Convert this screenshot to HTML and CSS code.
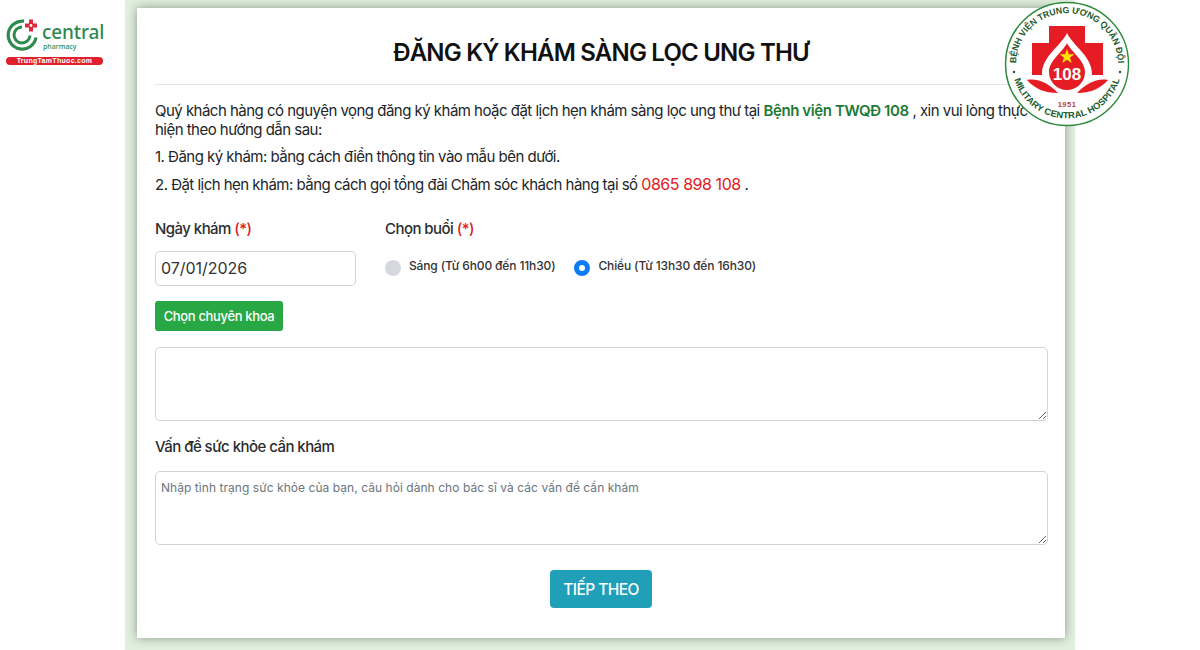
FILE: index.html
```html
<!DOCTYPE html>
<html lang="vi">
<head>
<meta charset="utf-8">
<title>Đăng ký khám sàng lọc ung thư</title>
<link rel="stylesheet" href="styles.css">
</head>
<body>
<a class="brand">
  <svg class="brand-mark" width="36" height="36" viewBox="0 0 36 36">
    <path d="M19 3.2A14 14 0 1 0 31 19.5" fill="none" stroke="#2f8a4e" stroke-width="3.2"/>
    <path d="M17 9A8 8 0 1 0 25 17.5" fill="none" stroke="#2f8a4e" stroke-width="3"/>
    <path d="M24 1.5h4v4h4v4h-4v4h-4v-4h-4v-4h4z" fill="#e0263a"/>
    <circle cx="26" cy="7.5" r="1.4" fill="#fff"/>
  </svg>
  <span class="brand-name">central</span>
  <span class="brand-sub">pharmacy</span>
  <span class="brand-url">TrungTamThuoc.com</span>
</a>

<svg class="seal" width="128" height="128" viewBox="0 0 128 128">
  <circle cx="64" cy="64" r="61.5" fill="#fff" stroke="#2c8a3c" stroke-width="1.4"/>
  <path d="M46 26h36v17h18v32H82v12H46V75H29V43h17z" fill="#e51c23"/>
  <path d="M64 33C58 46 39 56 39 74c0 12 11 22 25 22s25-10 25-22C89 56 70 46 64 33z" fill="#fff"/>
  <path d="M64 43C60 52 46 60 46 72c0 10 8 18 18 18s18-8 18-18C82 60 68 52 64 43z" fill="#e51c23"/>
  <path d="M64 49l1.900 5.200h5.500l-4.400 3.300 1.700 5.500-4.700-3.300-4.700 3.300 1.700-5.500-4.400-3.300h5.500z" fill="#ffe400"/>
  <path d="M24 80C36 78 46 84 55 93C42 93 32 89 24 80zM105 80C93 78 83 84 74 93C87 93 97 89 105 80z" fill="#e51c23"/>
  <text class="seal-num" x="64" y="80" text-anchor="middle">108</text>
  <text class="seal-year" x="64" y="107" text-anchor="middle">1951</text>
  <defs>
    <path id="seal-top" d="M15.500 80A51 51 0 1 1 112.500 80"/>
    <path id="seal-bottom" d="M9.500 56A55 55 0 1 0 118.500 56"/>
  </defs>
  <text class="seal-text"><textPath href="#seal-top" startOffset="50%" text-anchor="middle" textLength="158" lengthAdjust="spacingAndGlyphs">BỆNH VIỆN TRUNG ƯƠNG QUÂN ĐỘI</textPath></text>
  <text class="seal-text"><textPath href="#seal-bottom" startOffset="50%" text-anchor="middle" textLength="140" lengthAdjust="spacingAndGlyphs">MILITARY CENTRAL HOSPITAL</textPath></text>
  <circle cx="11" cy="72" r="1.2" fill="#1d5a2a"/>
  <circle cx="117" cy="72" r="1.2" fill="#1d5a2a"/>
</svg>

<div class="backdrop">
  <main class="card">
    <h1 class="title">ĐĂNG KÝ KHÁM SÀNG LỌC UNG THƯ</h1>
    <div class="intro">
      <p class="intro-lead">Quý khách hàng có nguyện vọng đăng ký khám hoặc đặt lịch hẹn khám sàng lọc ung thư tại <strong class="hospital">Bệnh viện TWQĐ 108</strong> , xin vui lòng thực hiện theo hướng dẫn sau:</p>
      <p class="intro-step">1. Đăng ký khám: bằng cách điền thông tin vào mẫu bên dưới.</p>
      <p class="intro-step">2. Đặt lịch hẹn khám: bằng cách gọi tổng đài Chăm sóc khách hàng tại số <span class="phone">0865 898 108</span> .</p>
    </div>

    <form class="form">
      <div class="row">
        <div class="field-date">
          <label class="label">Ngày khám <span class="req">(*)</span></label>
          <div class="input">07/01/2026</div>
        </div>
        <div class="field-session">
          <label class="label">Chọn buổi <span class="req">(*)</span></label>
          <div class="radios">
            <div class="radio"><span class="dot"></span><span class="radio-text">Sáng (Từ 6h00 đến 11h30)</span></div>
            <div class="radio"><span class="dot dot-on"></span><span class="radio-text">Chiều (Từ 13h30 đến 16h30)</span></div>
          </div>
        </div>
      </div>
      <button type="button" class="btn-green">Chọn chuyên khoa</button>
      <textarea class="area area-first"></textarea>
      <label class="label label-health">Vấn đề sức khỏe cần khám</label>
      <textarea class="area" placeholder="Nhập tình trạng sức khỏe của bạn, câu hỏi dành cho bác sĩ và các vấn đề cần khám"></textarea>
      <div class="actions"><button type="button" class="btn-next">TIẾP THEO</button></div>
    </form>
  </main>
</div>
</body>
</html>
```

FILE: styles.css
```css
* { box-sizing: border-box; }
html, body { margin: 0; height: 650px; overflow: hidden; }
body {
  position: relative;
  background: #fff;
  font-family: Inter, "Liberation Sans", sans-serif;
  color: #212529;
  display: flex;
  justify-content: center;
}
.backdrop {
  width: 950px;
  height: 650px;
  background: #e2f0e0;
  padding: 8px 10px 12px 12px;
}
.card {
  height: 630px;
  background: #fff;
  padding: 0 18px;
  box-shadow: 0 0 10px rgba(60, 80, 60, .55);
}
.title {
  margin: 0;
  height: 77px;
  padding-top: 27px;
  border-bottom: 1px solid #e2e4e6;
  text-align: center;
  font-size: 24px;
  line-height: 36px;
  font-weight: 600;
  letter-spacing: -.8px;
  color: #111;
}
.intro { padding-top: 16px; font-size: 15px; letter-spacing: -.52px; }
.intro p { margin: 0; }
.intro-lead { line-height: 19px; margin-bottom: 9px !important; width: 880px; }
.intro-step { line-height: 18px; margin-bottom: 9px !important; }
.hospital { color: #1f7a35; font-weight: 600; letter-spacing: -.4px; }
.phone { color: #e01b1b; font-size: 16px; font-weight: 400; letter-spacing: -.45px; }
.form { padding-top: 17px; }
.row { display: flex; }
.field-date { width: 230px; }
.label { display: block; font-size: 15px; line-height: 18px; letter-spacing: -.55px; font-weight: 500; color: #2a2d30; }
.req { color: #e01b1b; }
.input {
  margin-top: 13px;
  width: 201px;
  height: 35px;
  border: 1px solid #ced4da;
  border-radius: 5px;
  padding: 0 5px;
  font-size: 16px;
  line-height: 32px;
  letter-spacing: -.05px;
  color: #333;
}
.radios { display: flex; gap: 19px; margin-top: 14px; }
.radio { display: flex; align-items: flex-start; gap: 8px; padding-top: 6px; }
.dot { width: 16px; height: 16px; border-radius: 50%; background: #d5d9df; margin-top: 2px; }
.dot-on { background: #fff; border: 5px solid #0d7bf2; }
.radio-text { font-size: 12px; line-height: 15px; letter-spacing: -.14px; color: #333; font-weight: 500; }
.btn-green {
  display: block;
  margin-top: 15px;
  width: 128px;
  height: 30px;
  border: 0;
  border-radius: 3px;
  background: #28a745;
  color: #fff;
  font: 500 13px Inter, "Liberation Sans", sans-serif;
  letter-spacing: -.35px;
  padding: 0;
}
.area {
  display: block;
  width: 893px;
  height: 74px;
  border: 1px solid #ced4da;
  border-radius: 5px;
  padding: 8px 5px;
  font: 12px/15px Inter, "Liberation Sans", sans-serif;
  letter-spacing: .05px;
  resize: vertical;
  outline: 0;
}
.area::placeholder { color: #6c757d; opacity: 1; }
.area-first { margin-top: 16px; }
.label-health { margin: 17px 0 15px; }
.actions { display: flex; justify-content: center; padding-top: 25px; }
.btn-next {
  width: 102px;
  height: 38px;
  border: 0;
  border-radius: 4px;
  background: #20a0b8;
  color: #fff;
  font: 500 15.5px Inter, "Liberation Sans", sans-serif;
  letter-spacing: -.55px;
  padding: 0;
}

.brand { position: absolute; left: 5px; top: 18px; width: 98px; height: 48px; }
.brand-mark { position: absolute; left: 0; top: 0; }
.brand-name { position: absolute; left: 37px; top: 3px; font: 500 19px/22px "Noto Sans", sans-serif; color: #2f8a4e; letter-spacing: -.1px; }
.brand-sub { position: absolute; left: 38px; top: 24px; font: 500 7px/9px "Noto Sans", sans-serif; color: #2f8a4e; }
.brand-url {
  position: absolute; left: 1px; top: 39px; width: 97px; height: 8px;
  border-radius: 4px; background: #e0202c; color: #fff;
  font: 700 7px/8px "Liberation Sans", sans-serif; text-align: center; letter-spacing: .3px;
}
.seal { position: absolute; left: 1003px; top: 0; z-index: 2; }
.seal-num { font: 700 17px "Liberation Sans", sans-serif; fill: #fff; }
.seal-year { font: 700 7.5px "Liberation Sans", sans-serif; fill: #b5473a; letter-spacing: .5px; }
.seal-text { font: 700 9px "Liberation Sans", sans-serif; fill: #1d5a2a; }
```
